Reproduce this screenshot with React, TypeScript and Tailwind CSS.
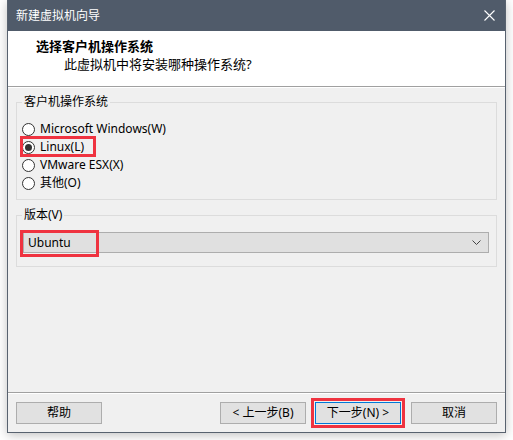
import React from "react";

const font = { fontFamily: "'Noto Sans', 'Noto Sans CJK SC', sans-serif" };

function Radio({ checked, label }: { checked?: boolean; label: string }) {
  return (
    <div className="h-[18px] flex items-center pl-[5px] gap-[5px]">
      <span className="w-[13px] h-[13px] rounded-full border border-[#333333] bg-white flex items-center justify-center shrink-0">
        {checked && <span className="w-[7px] h-[7px] rounded-full bg-[#333333]" />}
      </span>
      <span className="text-[12px] leading-[16px] text-black whitespace-nowrap">{label}</span>
    </div>
  );
}

function Btn({ children, primary, className = "" }: { children: React.ReactNode; primary?: boolean; className?: string }) {
  return (
    <div
      className={
        "w-[86px] h-[22px] flex items-center justify-center text-[12px] leading-[16px] text-black bg-[#e1e1e1] border " +
        (primary ? "border-[#0078d7]" : "border-[#adadad]") +
        " " +
        className
      }
    >
      {children}
    </div>
  );
}

export default function App() {
  return (
    <div className="w-[513px] h-[440px] bg-white overflow-hidden" style={font}>
      <div className="ml-[7px] w-[499px] h-[433px] border-x border-b border-[#58626f] bg-[#f0f0f0] flex flex-col shadow-[0_2px_10px_rgba(0,0,0,0.25)]">
        {/* title bar */}
        <div className="h-[31px] bg-[#505b6a] flex items-center justify-between pl-[8px] pr-[10px] shrink-0">
          <span className="text-[12px] leading-[16px] text-white">新建虚拟机向导</span>
          <svg width="11" height="11" viewBox="0 0 11 11" className="mb-[1px]">
            <path d="M0.5 0.5 L10.5 10.5 M10.5 0.5 L0.5 10.5" stroke="#ffffff" strokeWidth="1.1" />
          </svg>
        </div>
        {/* header */}
        <div className="h-[56px] bg-white border-b border-[#a0a0a0] shrink-0 pl-[28px] pt-[6px]">
          <div className="text-[13px] leading-[18px] font-bold text-black">选择客户机操作系统</div>
          <div className="text-[13px] leading-[18px] text-black pl-[28px]">此虚拟机中将安装哪种操作系统?</div>
        </div>
        <div className="h-px bg-white shrink-0" />
        {/* body */}
        <div className="flex-1 flex flex-col px-[8px]">
          <fieldset className="mt-[6px] border border-[#dcdcdc] pb-[7px]">
            <legend className="ml-[5px] px-[2px] text-[12px] leading-[16px] text-black">客户机操作系统</legend>
            <div className="mt-[10px]">
              <Radio label="Microsoft Windows(W)" />
              <div className="relative">
                <Radio checked label="Linux(L)" />
                <div className="absolute left-[3px] top-[-2px] w-[76px] h-[21px] border-[3px] border-[#ef3340] pointer-events-none" />
              </div>
              <Radio label="VMware ESX(X)" />
              <Radio label="其他(O)" />
            </div>
          </fieldset>
          <fieldset className="mt-[7px] border border-[#dcdcdc] pb-[13px]">
            <legend className="ml-[5px] px-[2px] text-[12px] leading-[16px] text-black">版本(V)</legend>
            <div className="relative mt-[9px] ml-[6px] w-[466px] h-[21px] border border-[#adadad] bg-[#e0e0e0] flex items-center justify-between pl-[4px] pr-[7px]">
              <span className="text-[12px] leading-[16px] text-black">Ubuntu</span>
              <svg width="9" height="5" viewBox="0 0 9 5">
                <path d="M0.5 0.5 L4.5 4.5 L8.5 0.5" stroke="#444444" strokeWidth="1" fill="none" />
              </svg>
              <div className="absolute left-[-4px] top-[-3px] w-[79px] h-[27px] border-[3px] border-[#ef3340] pointer-events-none" />
            </div>
          </fieldset>
          <div className="flex-1" />
        </div>
        {/* separator */}
        <div className="h-px bg-[#a0a0a0] shrink-0" />
        <div className="h-px bg-white shrink-0" />
        {/* buttons */}
        <div className="flex items-center px-[8px] pt-[8px] pb-[8px] shrink-0">
          <Btn>帮助</Btn>
          <div className="flex-1" />
          <Btn>&lt; 上一步(B)</Btn>
          <div className="relative ml-[9px]">
            <Btn primary>下一步(N) &gt;</Btn>
            <div className="absolute inset-[-4px] border-[3px] border-[#ef3340] pointer-events-none" />
          </div>
          <Btn className="ml-[10px]">取消</Btn>
        </div>
      </div>
    </div>
  );
}
